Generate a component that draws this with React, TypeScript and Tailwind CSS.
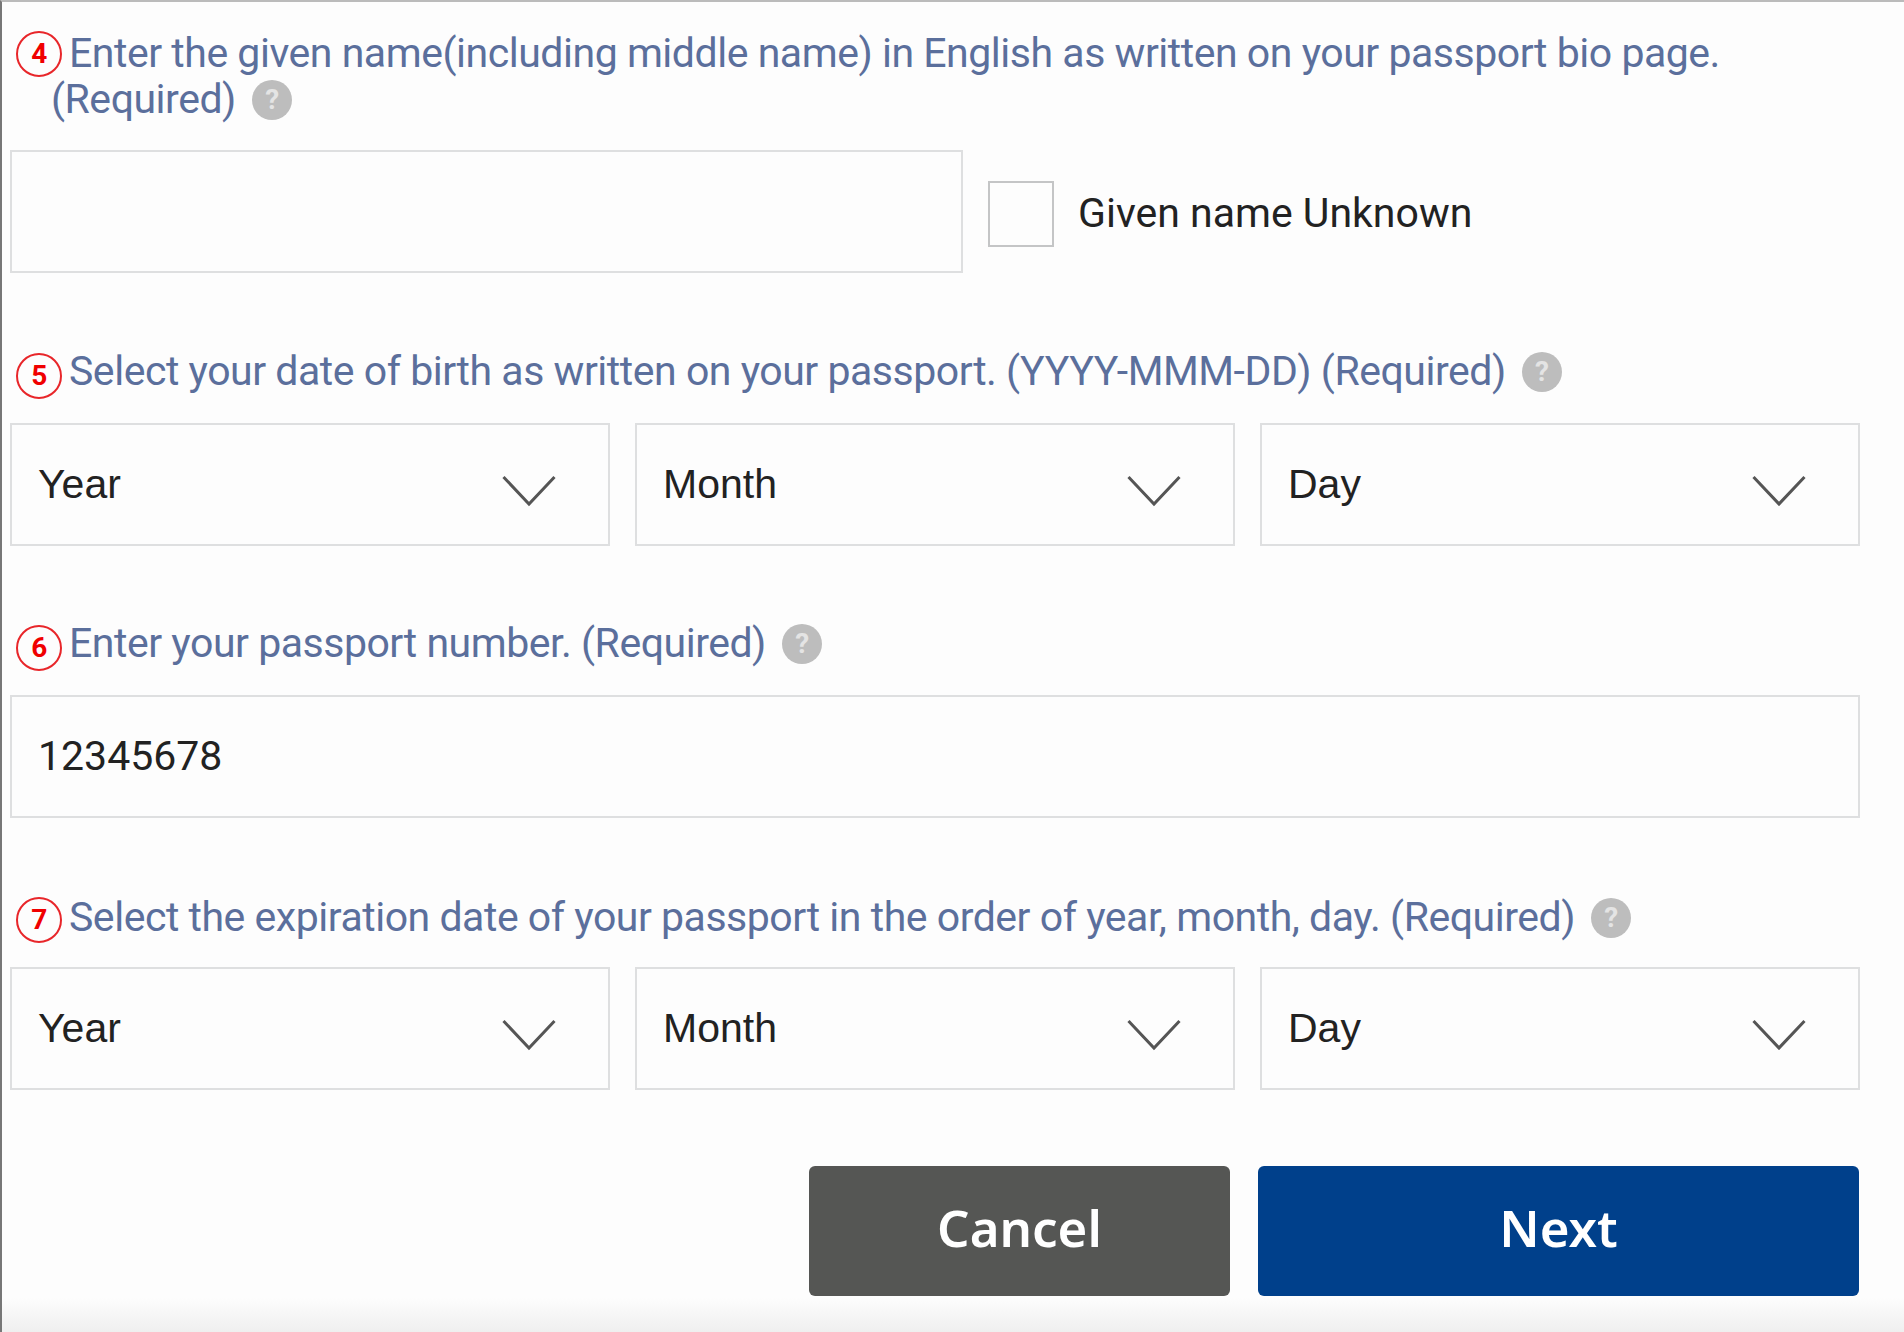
const labelClass =
  "pl-[41px] -indent-[35px] text-[41px] leading-[46px] tracking-[-0.47px] text-[#5b6f9c] font-['Roboto',sans-serif]";

function StepBadge({ n, shift = "translate-y-[2px]" }: { n: number; shift?: string }) {
  return (
    <span className={`-my-[6px] mr-[7px] inline-flex h-[46px] w-[46px] ${shift} items-center justify-center rounded-full border-2 border-[#e8262a] indent-0 align-middle text-[28px] leading-none font-bold text-[#f00000]`}>
      {n}
    </span>
  );
}

function Help() {
  return (
    <span className="-my-[6px] ml-[16px] inline-flex h-[40px] w-[40px] -translate-y-[2px] items-center justify-center rounded-full bg-[#bdbdbd] indent-0 align-middle text-[28px] leading-none font-bold text-[#e4e4e4]">
      ?
    </span>
  );
}

function Chevron() {
  return (
    <svg width="54" height="32" viewBox="0 0 54 32" fill="none" className="mt-[12px] shrink-0">
      <path d="M1.5 2 L27 29 L52.5 2" stroke="#555" strokeWidth="3" />
    </svg>
  );
}

function DateSelect({ label }: { label: string }) {
  return (
    <div className="flex h-[123px] items-center justify-between border-2 border-[#dedfe0] pr-[52px] pl-[26px] font-['Liberation_Sans',sans-serif] text-[41px] text-[#222]">
      <span>{label}</span>
      <Chevron />
    </div>
  );
}

function DateRow() {
  return (
    <div className="grid grid-cols-3 gap-[25px]">
      <DateSelect label="Year" />
      <DateSelect label="Month" />
      <DateSelect label="Day" />
    </div>
  );
}

export default function App() {
  return (
    <div className="flex min-h-[1332px] flex-col border-t-2 border-l-2 border-t-[#bbb] border-l-[#777] bg-[#fdfdfd]">
      <div className="mr-[44px] ml-[8px] flex-1 pt-[28px]">
        {/* step 4 */}
        <p className={labelClass}>
          <StepBadge n={4} shift="-translate-y-[2px]" />
          Enter the given name(including middle name) in English as written on your passport bio page.
          <br />
          (Required)
          <Help />
        </p>
        <div className="mt-[28px] flex items-center">
          <div className="h-[123px] w-[953px] border-2 border-[#dedfe0]" />
          <div className="ml-[25px] h-[66px] w-[66px] translate-y-[2px] border-2 border-[#c4c5c6]" />
          <span className="ml-[24px] translate-y-[2px] font-['Roboto',sans-serif] text-[41px] text-[#222]">Given name Unknown</span>
        </div>

        {/* step 5 */}
        <p className={`${labelClass} mt-[75px]`}>
          <StepBadge n={5} />
          Select your date of birth as written on your passport. (YYYY-MMM-DD) (Required)
          <Help />
        </p>
        <div className="mt-[29px]">
          <DateRow />
        </div>

        {/* step 6 */}
        <p className={`${labelClass} mt-[74px]`}>
          <StepBadge n={6} />
          Enter your passport number. (Required)
          <Help />
        </p>
        <div className="mt-[29px] flex h-[123px] items-center border-2 border-[#dedfe0] pl-[26px] font-['Roboto',sans-serif] text-[41px] text-[#222]">
          12345678
        </div>

        {/* step 7 */}
        <p className={`${labelClass} mt-[76px]`}>
          <StepBadge n={7} shift="translate-y-[0px]" />
          Select the expiration date of your passport in the order of year, month, day. (Required)
          <Help />
        </p>
        <div className="mt-[27px]">
          <DateRow />
        </div>

        <div className="mt-[76px] flex justify-end gap-[28px] pr-[1px] font-['Noto_Sans',sans-serif] text-[51px] font-semibold text-white">
          <button className="flex h-[130px] w-[421px] items-center justify-center rounded-[6px] bg-[#555654] pb-[7px]">Cancel</button>
          <button className="flex h-[130px] w-[601px] items-center justify-center rounded-[6px] bg-[#00408b] pb-[8px]">Next</button>
        </div>
      </div>
      <div className="h-[34px] bg-gradient-to-b from-[#fdfdfd] to-[#efefef]" />
    </div>
  );
}
